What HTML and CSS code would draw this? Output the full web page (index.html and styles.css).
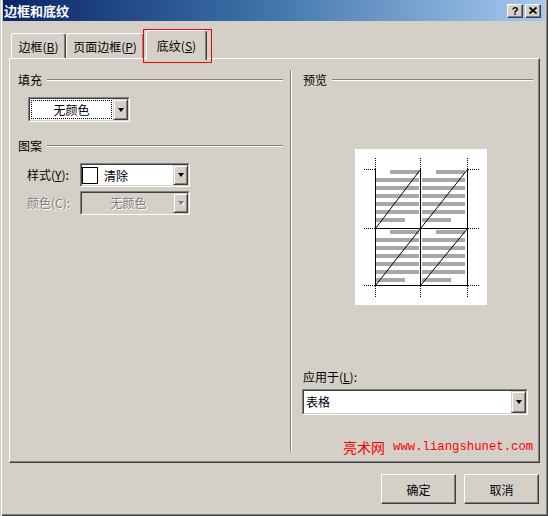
FILE: index.html
```html
<!DOCTYPE html>
<html lang="zh-CN">
<head>
<meta charset="utf-8">
<title>边框和底纹</title>
<link rel="stylesheet" href="styles.css">
</head>
<body>
<div class="window">
  <div class="titlebar">
    <span class="title">边框和底纹</span>
    <div class="caption-btns">
      <span class="cap-btn help">?</span>
      <span class="cap-btn close"><svg width="8" height="7" viewBox="0 0 8 7"><path d="M0.5 0.5 L7.5 6.5 M7.5 0.5 L0.5 6.5" stroke="#000" stroke-width="1.7" fill="none"/></svg></span>
    </div>
  </div>

  <div class="tabstrip">
    <div class="tab tab-b">边框(<u>B</u>)</div>
    <div class="tab tab-p">页面边框(<u>P</u>)</div>
    <div class="tab selected">底纹(<u>S</u>)<span class="highlight"></span></div>
  </div>

  <div class="panel">
    <div class="col-left">
      <div class="group-head"><span>填充</span><i class="etch"></i></div>
      <div class="combo fill-combo">
        <div class="combo-in">
          <div class="combo-text"><span class="focus">无颜色</span></div>
          <div class="drop"><i class="arrow"></i></div>
        </div>
      </div>

      <div class="group-head pattern-head"><span>图案</span><i class="etch"></i></div>
      <div class="field-row first">
        <span class="field-label">样式(<u>Y</u>):</span>
        <div class="combo small-combo">
          <div class="combo-in">
            <div class="combo-text swatch-text"><span class="swatch"></span><span class="swatch-name">清除</span></div>
            <div class="drop"><i class="arrow"></i></div>
          </div>
        </div>
      </div>
      <div class="field-row disabled">
        <span class="field-label">颜色(C):</span>
        <div class="combo small-combo">
          <div class="combo-in">
            <div class="combo-text centered">无颜色</div>
            <div class="drop"><i class="arrow"></i></div>
          </div>
        </div>
      </div>
    </div>

    <div class="vsep"></div>

    <div class="col-right">
      <div class="group-head"><span>预览</span><i class="etch"></i></div>
      <div class="preview">
        <svg width="132" height="156" viewBox="0 0 132 156">
          <g fill="#a8a8a8">
            <rect x="35" y="21" width="29" height="4"/>
            <rect x="21" y="29" width="43" height="4"/>
            <rect x="21" y="37" width="43" height="4"/>
            <rect x="21" y="45" width="43" height="4"/>
            <rect x="21" y="53" width="43" height="4"/>
            <rect x="21" y="61" width="43" height="4"/>
            <rect x="21" y="69" width="29" height="4"/>
            <rect x="81" y="21" width="29" height="4"/>
            <rect x="67" y="29" width="43" height="4"/>
            <rect x="67" y="37" width="43" height="4"/>
            <rect x="67" y="45" width="43" height="4"/>
            <rect x="67" y="53" width="43" height="4"/>
            <rect x="67" y="61" width="43" height="4"/>
            <rect x="67" y="69" width="29" height="4"/>
            <rect x="35" y="81" width="29" height="4"/>
            <rect x="21" y="89" width="43" height="4"/>
            <rect x="21" y="97" width="43" height="4"/>
            <rect x="21" y="105" width="43" height="4"/>
            <rect x="21" y="113" width="43" height="4"/>
            <rect x="21" y="121" width="43" height="4"/>
            <rect x="21" y="129" width="29" height="4"/>
            <rect x="81" y="81" width="29" height="4"/>
            <rect x="67" y="89" width="43" height="4"/>
            <rect x="67" y="97" width="43" height="4"/>
            <rect x="67" y="105" width="43" height="4"/>
            <rect x="67" y="113" width="43" height="4"/>
            <rect x="67" y="121" width="43" height="4"/>
            <rect x="67" y="129" width="29" height="4"/>
          </g>
          <g stroke="#000" stroke-width="1" shape-rendering="crispEdges" fill="none">
            <path d="M20.5 20 V137 M65.5 20 V137 M112.5 20 V137 M20 79.5 H113 M20 136.5 H113"/>
          </g>
          <g stroke="#000" stroke-width="1" fill="none">
            <path d="M20.5 79.5 L65.5 20.5 M65.5 79.5 L112.5 20.5 M20.5 136.5 L65.5 79.5 M65.5 136.5 L112.5 79.5"/>
          </g>
          <g stroke="#000" stroke-width="1" stroke-dasharray="1 1" shape-rendering="crispEdges" fill="none">
            <path d="M20.5 9 V20 M65.5 9 V20 M112.5 9 V20 M9 20.5 H20 M113 20.5 H124 M9 79.5 H20 M113 79.5 H124 M20.5 137 V148 M65.5 137 V148 M112.5 137 V148 M9 136.5 H20 M113 136.5 H124"/>
          </g>
        </svg>
      </div>
      <div class="apply-label">应用于(<u>L</u>):</div>
      <div class="combo apply-combo">
        <div class="combo-in">
          <div class="combo-text">表格</div>
          <div class="drop"><i class="arrow"></i></div>
        </div>
      </div>
      <div class="watermark"><span class="wm-cn">亮术网</span><span class="wm-url">www.liangshunet.com</span></div>
    </div>
  </div>

  <div class="buttons">
    <button class="btn">确定</button>
    <button class="btn">取消</button>
  </div>
</div>
</body>
</html>
```

FILE: styles.css
```css
* { box-sizing: border-box; }
html, body { margin: 0; padding: 0; }
body {
  background: #d4d0c8;
  font-family: "Noto Sans CJK SC", "Liberation Sans", sans-serif;
  font-size: 12px;
  color: #000;
}
u { text-decoration: underline; text-underline-offset: 1px; }

.window {
  width: 548px;
  height: 516px;
  background: #d4d0c8;
  padding: 0 3px 3px 3px;
  display: flex;
  flex-direction: column;
  box-shadow: inset 1px 0 #d4d0c8, inset 2px 0 #fff, inset -1px -1px #404040, inset -2px -2px #808080;
}

/* title bar */
.titlebar {
  height: 21px;
  flex: none;
  display: flex;
  align-items: center;
  justify-content: space-between;
  padding: 0 4px 0 1px;
  background: linear-gradient(to right, #0a246a, #3a6ea5 45%, #a6caf0);
}
.title { color: #fff; font-weight: bold; font-size: 13px; line-height: 16px; }
.caption-btns { display: flex; gap: 2px; }
.cap-btn {
  width: 16px;
  height: 14px;
  background: #d4d0c8;
  border: 1px solid;
  border-color: #fff #404040 #404040 #fff;
  box-shadow: inset -1px -1px #808080;
  display: flex;
  align-items: center;
  justify-content: center;
}
.cap-btn.help {
  font-family: "Liberation Sans", sans-serif;
  font-weight: bold;
  font-size: 11px;
  line-height: 12px;
}

/* tabs */
.tabstrip {
  height: 37px;
  flex: none;
  display: flex;
  align-items: flex-end;
  padding-left: 8px;
}
.tab {
  height: 25px;
  border: 1px solid #fff;
  border-bottom: none;
  border-right-color: #404040;
  box-shadow: inset -1px 0 #808080;
  border-radius: 3px 3px 0 0;
  display: flex;
  align-items: center;
  justify-content: center;
  line-height: 16px;
  padding-top: 2px;
  white-space: nowrap;
}
.tab-b { width: 55px; }
.tab-p { width: 78px; }
.tab.selected {
  width: 61px;
  height: 30px;
  margin-left: 2px;
  margin-bottom: -2px;
  padding-top: 0;
  position: relative;
  z-index: 1;
  background: #d4d0c8;
}
.highlight {
  position: absolute;
  left: -4px;
  top: -2px;
  width: 69px;
  height: 34px;
  border: 1px solid #ff0000;
}

/* panel */
.panel {
  flex: none;
  margin-left: 6px;
  width: 531px;
  height: 405px;
  border-top: 1px solid #fff;
  border-left: 1px solid #fff;
  border-right: 1px solid #404040;
  border-bottom: 1px solid #404040;
  box-shadow: inset -1px -1px #808080;
  display: flex;
}
.col-left {
  width: 273px;
  flex: none;
  padding: 13px 0 0 8px;
  display: flex;
  flex-direction: column;
  align-items: flex-start;
}
.vsep {
  flex: none;
  width: 2px;
  margin: 11px 0 11px 7px;
  border-left: 1px solid #808080;
  border-right: 1px solid #fff;
}
.col-right {
  flex: 1;
  padding: 13px 7px 0 11px;
  display: flex;
  flex-direction: column;
  align-items: flex-start;
}

.group-head {
  align-self: stretch;
  height: 16px;
  display: flex;
  align-items: center;
  gap: 5px;
  line-height: 16px;
}
.etch {
  flex: 1;
  height: 2px;
  border-top: 1px solid #808080;
  border-bottom: 1px solid #fff;
}
.pattern-head { margin-top: 16px; }

/* combo boxes */
.combo {
  border: 1px solid;
  border-color: #808080 #fff #fff #808080;
  background: #fff;
}
.combo-in {
  height: 100%;
  border: 1px solid;
  border-color: #404040 #d4d0c8 #d4d0c8 #404040;
  display: flex;
}
.combo-text {
  flex: 1;
  min-width: 0;
  display: flex;
  align-items: center;
  padding-left: 2px;
  line-height: 16px;
  white-space: nowrap;
}
.drop {
  flex: none;
  width: 15px;
  height: 100%;
  background: #d4d0c8;
  border: 1px solid;
  border-color: #d4d0c8 #404040 #404040 #d4d0c8;
  box-shadow: inset 1px 1px #fff, inset -1px -1px #808080;
  display: flex;
  align-items: center;
  justify-content: center;
}
.arrow {
  display: block;
  width: 1px;
  height: 0;
  border-left: 3px solid transparent;
  border-right: 3px solid transparent;
  border-top: 4px solid #000;
}

.fill-combo {
  margin: 9px 0 0 10px;
  width: 102px;
  height: 25px;
}
.fill-combo .combo-text { padding: 1px; }
.focus {
  flex: 1;
  align-self: stretch;
  border: 1px dotted #000;
  display: flex;
  align-items: center;
  justify-content: center;
}

.field-row {
  display: flex;
  align-items: center;
  margin-left: 9px;
  margin-top: 4px;
}
.field-row.first { margin-top: 9px; }
.field-label { width: 53px; line-height: 16px; white-space: nowrap; }
.small-combo { width: 110px; height: 24px; }
.swatch-text { padding-left: 0; }
.swatch {
  width: 16px;
  height: 17px;
  border: 1px solid #000;
  background: #fff;
  flex: none;
}
.swatch-name { margin-left: 6px; padding-top: 2px; }

.field-row.disabled .field-label { color: #808080; text-shadow: 1px 1px 0 #fff; }
.field-row.disabled .combo { background: #d4d0c8; }
.field-row.disabled .combo-text { justify-content: center; color: #808080; text-shadow: 1px 1px 0 #fff; }
.field-row.disabled .arrow { border-top-color: #808080; filter: drop-shadow(1px 1px 0 #fff); }

/* right column */
.preview {
  margin: 61px 0 0 52px;
  width: 132px;
  height: 156px;
  background: #fff;
}
.preview svg { display: block; }
.apply-label { margin-top: 64px; line-height: 16px; }
.apply-combo {
  margin: 4px 0 0 -1px;
  width: 226px;
  height: 26px;
}
.watermark {
  margin: 24px 0 0 40px;
  display: flex;
  align-items: center;
  gap: 8px;
  color: #ff0000;
  white-space: nowrap;
  line-height: 16px;
}
.wm-cn { font-size: 14px; }
.wm-url { font-family: "Liberation Mono", monospace; font-size: 12.3px; }

/* buttons */
.buttons {
  flex: none;
  display: flex;
  justify-content: flex-end;
  gap: 8px;
  margin-top: 11px;
  padding-right: 6px;
}
.btn {
  width: 75px;
  height: 30px;
  padding: 0;
  font: inherit;
  color: #000;
  background: #d4d0c8;
  border: 1px solid;
  border-color: #fff #404040 #404040 #fff;
  box-shadow: inset -1px -1px #808080;
}
```
